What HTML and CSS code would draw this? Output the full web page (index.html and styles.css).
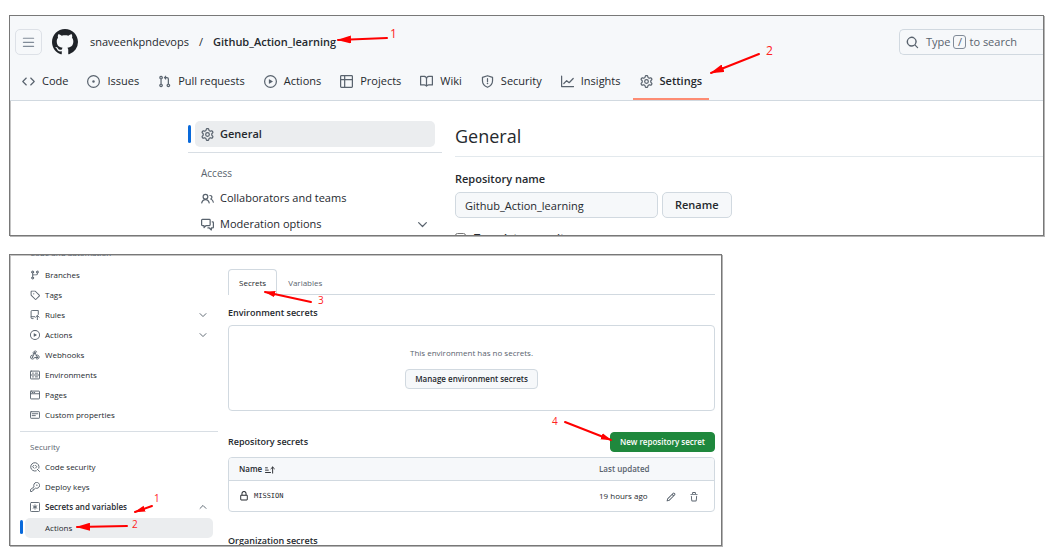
FILE: index.html
```html
<!DOCTYPE html>
<html lang="en">
<head>
<meta charset="utf-8">
<title>Github_Action_learning settings</title>
<link rel="stylesheet" href="styles.css">
</head>
<body>
<svg class="sprite" aria-hidden="true">
  <defs>
    <symbol id="bars" viewBox="0 0 16 16"><path d="M1 2.75A.75.75 0 0 1 1.75 2h12.5a.75.75 0 0 1 0 1.500H1.750A.75.75 0 0 1 1 2.750Zm0 5A.75.75 0 0 1 1.750 7h12.500a.75.75 0 0 1 0 1.500H1.750A.75.75 0 0 1 1 7.750ZM1.750 12h12.500a.75.75 0 0 1 0 1.500H1.750a.75.75 0 0 1 0-1.500Z"/></symbol>
    <symbol id="mark" viewBox="0 0 16 16"><path d="M8 0C3.58 0 0 3.58 0 8c0 3.54 2.29 6.53 5.47 7.59.4.07.55-.17.55-.38 0-.19-.01-.82-.01-1.49-2.01.37-2.53-.49-2.69-.94-.09-.23-.48-.94-.82-1.13-.28-.15-.68-.52-.01-.53.63-.01 1.08.58 1.23.82.72 1.21 1.87.87 2.33.66.07-.52.28-.87.51-1.07-1.78-.2-3.64-.89-3.64-3.95 0-.87.31-1.59.82-2.15-.08-.2-.36-1.02.08-2.12 0 0 .67-.21 2.2.82.64-.18 1.32-.27 2-.27.68 0 1.36.09 2 .27 1.53-1.04 2.2-.82 2.2-.82.44 1.1.16 1.92.08 2.12.51.56.82 1.27.82 2.15 0 3.07-1.87 3.75-3.65 3.95.29.25.54.73.54 1.48 0 1.07-.01 1.93-.01 2.2 0 .21.15.46.55.38A8.013 8.013 0 0 0 16 8c0-4.42-3.58-8-8-8z"/></symbol>
    <symbol id="code" viewBox="0 0 16 16"><path d="m11.28 3.22 4.25 4.25a.75.75 0 0 1 0 1.06l-4.25 4.25a.749.749 0 0 1-1.275-.326.749.749 0 0 1 .215-.734L13.94 8l-3.72-3.72a.749.749 0 0 1 .326-1.275.749.749 0 0 1 .734.215Zm-6.56 0a.751.751 0 0 1 1.042.018.751.751 0 0 1 .018 1.042L2.06 8l3.720 3.720a.749.749 0 0 1-.326 1.275.749.749 0 0 1-.734-.215L.47 8.53a.75.75 0 0 1 0-1.06Z"/></symbol>
    <symbol id="issue" viewBox="0 0 16 16"><path d="M8 9.5a1.5 1.5 0 1 0 0-3 1.5 1.5 0 0 0 0 3Z"/><path d="M8 0a8 8 0 1 1 0 16A8 8 0 0 1 8 0ZM1.5 8a6.5 6.5 0 1 0 13 0 6.5 6.5 0 0 0-13 0Z"/></symbol>
    <symbol id="pull" viewBox="0 0 16 16"><path d="M1.5 3.25a2.25 2.25 0 1 1 3 2.122v5.256a2.251 2.251 0 1 1-1.5 0V5.372A2.25 2.25 0 0 1 1.5 3.25Zm5.677-.177L9.573.677A.25.25 0 0 1 10 .854V2.5h1A2.5 2.5 0 0 1 13.5 5v5.628a2.251 2.251 0 1 1-1.5 0V5a1 1 0 0 0-1-1h-1v1.646a.25.25 0 0 1-.427.177L7.177 3.427a.25.25 0 0 1 0-.354ZM3.75 2.5a.75.75 0 1 0 0 1.5.75.75 0 0 0 0-1.5Zm0 9.5a.75.75 0 1 0 0 1.5.75.75 0 0 0 0-1.5Zm8.25.75a.75.75 0 1 0 1.5 0 .75.75 0 0 0-1.5 0Z"/></symbol>
    <symbol id="play" viewBox="0 0 16 16"><path d="M8 0a8 8 0 1 1 0 16A8 8 0 0 1 8 0ZM1.5 8a6.5 6.5 0 1 0 13 0 6.5 6.5 0 0 0-13 0Zm4.879-2.773 4.264 2.559a.25.25 0 0 1 0 .428l-4.264 2.559A.25.25 0 0 1 6 10.559V5.442a.25.25 0 0 1 .379-.215Z"/></symbol>
    <symbol id="table" viewBox="0 0 16 16"><path d="M0 1.75C0 .784.784 0 1.75 0h12.5C15.216 0 16 .784 16 1.75v12.5A1.75 1.75 0 0 1 14.25 16H1.75A1.75 1.75 0 0 1 0 14.25ZM6.5 6.5v8h7.75a.25.25 0 0 0 .25-.25V6.5Zm8-1.5V1.75a.25.25 0 0 0-.25-.25H6.5V5Zm-13 1.5v7.75c0 .138.112.25.25.25H5v-8ZM5 5V1.5H1.75a.25.25 0 0 0-.25.25V5Z"/></symbol>
    <symbol id="book" viewBox="0 0 16 16"><path d="M0 1.75A.75.75 0 0 1 .75 1h4.253c1.227 0 2.317.59 3 1.501A3.743 3.743 0 0 1 11.006 1h4.245a.75.75 0 0 1 .75.75v10.5a.75.75 0 0 1-.75.75h-4.507a2.25 2.25 0 0 0-1.591.659l-.622.621a.75.75 0 0 1-1.06 0l-.622-.621A2.25 2.25 0 0 0 5.258 13H.75a.75.75 0 0 1-.75-.75Zm7.251 10.324.004-5.073-.002-2.253A2.25 2.25 0 0 0 5.003 2.5H1.5v9h3.757a3.75 3.75 0 0 1 1.994.574ZM8.755 4.75l-.004 7.322a3.752 3.752 0 0 1 1.992-.572H14.5v-9h-3.495a2.25 2.25 0 0 0-2.25 2.25Z"/></symbol>
    <symbol id="shield" viewBox="0 0 16 16"><path class="line" d="M8 .9 14.200 2.900V7c0 3.600-2.400 6.500-6.200 8.100C4.200 13.500 1.800 10.600 1.800 7V2.900ZM8 4.500v3.700"/><circle cx="8" cy="10.500" r="1"/></symbol>
    <symbol id="graph" viewBox="0 0 16 16"><path class="line" d="M.75 1.500V14.250H15.500M3.500 10.500 7 7l3 2.500L15 4.300"/></symbol>
    <symbol id="gear" viewBox="0 0 16 16"><path d="M8 0a8.2 8.2 0 0 1 .701.031C9.444.095 9.99.645 10.16 1.29l.288 1.107c.018.066.079.158.212.224.231.114.454.243.668.386.123.082.233.09.299.071l1.103-.303c.644-.176 1.392.021 1.82.63.27.385.506.792.704 1.218.315.675.111 1.422-.364 1.891l-.814.806c-.049.048-.098.147-.088.294.016.257.016.515 0 .772-.01.147.038.246.088.294l.814.806c.475.469.679 1.216.364 1.891a7.977 7.977 0 0 1-.704 1.217c-.428.61-1.176.807-1.82.63l-1.102-.302c-.067-.019-.177-.011-.3.071a5.909 5.909 0 0 1-.668.386c-.133.066-.194.158-.211.224l-.29 1.106c-.168.646-.715 1.196-1.458 1.26a8.006 8.006 0 0 1-1.402 0c-.743-.064-1.289-.614-1.458-1.26l-.289-1.106c-.018-.066-.079-.158-.212-.224a5.738 5.738 0 0 1-.668-.386c-.123-.082-.233-.09-.299-.071l-1.103.303c-.644.176-1.392-.021-1.82-.63a8.12 8.12 0 0 1-.704-1.218c-.315-.675-.111-1.422.363-1.891l.815-.806c.05-.048.098-.147.088-.294a6.214 6.214 0 0 1 0-.772c.01-.147-.038-.246-.088-.294l-.815-.806C.635 6.045.431 5.298.746 4.623a7.92 7.92 0 0 1 .704-1.217c.428-.61 1.176-.807 1.82-.63l1.102.302c.067.019.177.011.3-.071.214-.143.437-.272.668-.386.133-.066.194-.158.211-.224l.29-1.106C6.009.645 6.556.095 7.299.03 7.53.01 7.764 0 8 0Zm-.571 1.525c-.036.003-.108.036-.137.146l-.289 1.105c-.147.561-.549.967-.998 1.189-.173.086-.34.183-.5.29-.417.278-.97.423-1.529.27l-1.103-.303c-.109-.03-.175.016-.195.045-.22.312-.412.644-.573.99-.014.031-.021.11.059.19l.815.806c.411.406.562.957.53 1.456a4.709 4.709 0 0 0 0 .582c.032.499-.119 1.05-.53 1.456l-.815.806c-.081.08-.073.159-.059.19.162.346.353.677.573.989.02.03.085.076.195.046l1.102-.303c.56-.153 1.113-.008 1.53.27.161.107.328.204.501.29.447.222.85.629.997 1.189l.289 1.105c.029.109.101.143.137.146a6.6 6.6 0 0 0 1.142 0c.036-.003.108-.036.137-.146l.289-1.105c.147-.561.549-.967.998-1.189.173-.086.34-.183.5-.29.417-.278.97-.423 1.529-.27l1.103.303c.109.029.175-.016.195-.045.22-.313.411-.644.573-.99.014-.031.021-.11-.059-.19l-.815-.806c-.411-.406-.562-.957-.53-1.456a4.709 4.709 0 0 0 0-.582c-.032-.499.119-1.05.53-1.456l.815-.806c.081-.08.073-.159.059-.19a6.464 6.464 0 0 0-.573-.989c-.02-.03-.085-.076-.195-.046l-1.102.303c-.56.153-1.113.008-1.53-.27a4.44 4.44 0 0 0-.501-.29c-.447-.222-.85-.629-.997-1.189l-.289-1.105c-.029-.11-.101-.143-.137-.146a6.6 6.6 0 0 0-1.142 0ZM11 8a3 3 0 1 1-6 0 3 3 0 0 1 6 0ZM9.5 8a1.5 1.5 0 1 0-3.001.001A1.5 1.5 0 0 0 9.5 8Z"/></symbol>
    <symbol id="search" viewBox="0 0 16 16"><path d="M10.680 11.740a6 6 0 0 1-7.922-8.982 6 6 0 0 1 8.982 7.922l3.040 3.040a.749.749 0 0 1-.326 1.275.749.749 0 0 1-.734-.215ZM11.500 7a4.499 4.499 0 1 0-8.997 0A4.499 4.499 0 0 0 11.500 7Z"/></symbol>
    <symbol id="people" viewBox="0 0 16 16"><path class="line" d="M.9 13.500c.5-2.500 2.300-4.200 4.600-4.200s4.100 1.700 4.600 4.200M11 4.300c1.500 0 2.400 1 2.400 2.200 0 1-.6 1.700-1.400 2.100 1.700.6 2.900 2 3.200 4"/><circle class="line" cx="5.500" cy="5.750" r="2.900"/></symbol>
    <symbol id="discussion" viewBox="0 0 16 16"><path class="line" d="M1.750 1.750h8.500a1 1 0 0 1 1 1v5.500a1 1 0 0 1-1 1H6.300L3.750 11.800V9.250h-2a1 1 0 0 1-1-1v-5.500a1 1 0 0 1 1-1ZM13.800 4.750h.45a1 1 0 0 1 1 1v5.500a1 1 0 0 1-1 1h-1.500v2.500l-2.500-2.500H8.500"/></symbol>
    <symbol id="down" viewBox="0 0 16 16"><path class="line" d="m3.250 5.750 4.750 4.750 4.750-4.750"/></symbol>
    <symbol id="up" viewBox="0 0 16 16"><path class="line" d="m3.250 10.250 4.750-4.750 4.750 4.750"/></symbol>
    <symbol id="branch" viewBox="0 0 16 16"><path d="M9.5 3.25a2.25 2.25 0 1 1 3 2.122V6A2.5 2.5 0 0 1 10 8.5H6a1 1 0 0 0-1 1v1.128a2.251 2.251 0 1 1-1.5 0V5.372a2.25 2.25 0 1 1 1.5 0v1.836A2.493 2.493 0 0 1 6 7h4a1 1 0 0 0 1-1v-.628A2.25 2.25 0 0 1 9.5 3.25Zm-6 0a.75.75 0 1 0 1.5 0 .75.75 0 0 0-1.5 0Zm8.25-.75a.75.75 0 1 0 0 1.5.75.75 0 0 0 0-1.5ZM4.250 12a.75.75 0 1 0 0 1.500.75.75 0 0 0 0-1.500Z"/></symbol>
    <symbol id="tag" viewBox="0 0 16 16"><path d="M1 7.775V2.75C1 1.784 1.784 1 2.750 1h5.025c.464 0 .910.184 1.238.513l6.250 6.250a1.750 1.750 0 0 1 0 2.474l-5.026 5.026a1.750 1.750 0 0 1-2.474 0l-6.250-6.250A1.752 1.752 0 0 1 1 7.775Zm1.500 0c0 .066.026.130.073.177l6.250 6.250a.25.25 0 0 0 .354 0l5.025-5.025a.25.25 0 0 0 0-.354l-6.250-6.250a.25.25 0 0 0-.177-.073H2.750a.25.25 0 0 0-.25.25ZM6 5a1 1 0 1 1 0 2 1 1 0 0 1 0-2Z"/></symbol>
    <symbol id="push" viewBox="0 0 16 16"><path class="line" d="M13.250 7V.75H3.500A1.750 1.750 0 0 0 1.750 2.500v9.750a1.500 1.500 0 0 0 1.500 1.500H5M2 10.750h5.500M11.750 15.500V9M9 11.500 11.750 8.750l2.750 2.750"/></symbol>
    <symbol id="webhook" viewBox="0 0 16 16"><path class="line" d="M5.500 6.500A3.200 3.200 0 1 1 11 3.200M3.900 8.100a3.200 3.200 0 1 0 3.200 3.900h5M9.700 8.600a3.200 3.200 0 1 1 .3 5.500M8 4.300l3.600 7.200M7.700 4.500 4.200 11"/><circle cx="8" cy="4.300" r="1.200"/><circle cx="4" cy="11.700" r="1.200"/><circle cx="12" cy="11.700" r="1.200"/></symbol>
    <symbol id="server" viewBox="0 0 16 16"><rect class="line" x=".75" y="1.750" width="14.500" height="12.500" rx="1"/><path class="line" d="M1 8h14M4 5h1.500M8.500 5h3.500M4 11h1.500M8.500 11h3.500"/></symbol>
    <symbol id="browser" viewBox="0 0 16 16"><rect class="line" x=".75" y="1.750" width="14.500" height="12.500" rx="1"/><path class="line" d="M1 6h14M3.500 4h1M6.500 4h1"/></symbol>
    <symbol id="note" viewBox="0 0 16 16"><rect class="line" x=".75" y="2.750" width="14.500" height="10.500" rx="1"/><path class="line" d="M3.500 6h9M3.500 9h5"/></symbol>
    <symbol id="codescan" viewBox="0 0 16 16"><path class="line" d="M14.200 10A6.700 6.700 0 1 0 10 14.200M11.500 11.500l3.700 3.700M6.200 5.300 4.200 7.500l2 2.200M8.800 5.300l2 2.200-2 2.200"/></symbol>
    <symbol id="key" viewBox="0 0 16 16"><path class="line" d="M6.200 7.200a4.750 4.750 0 1 1 2.600 2.600L7.500 11H6v1.500H4.500V14l-1.200 1.200H.75v-2.500Z"/><circle cx="11" cy="5" r="1.100"/></symbol>
    <symbol id="asterisk" viewBox="0 0 16 16"><rect class="line" x=".75" y=".75" width="14.500" height="14.500" rx="1.500"/><path class="line" d="M8 4.500v7M5 6.250l6 3.500M11 6.250l-6 3.500"/></symbol>
    <symbol id="sort" viewBox="0 0 16 16"><path class="line" d="M.8 4.500h3M.8 8.200h4.500M.8 12h8M12.200 13V3.500M9.500 6l2.700-2.700L15 6"/></symbol>
    <symbol id="lock" viewBox="0 0 16 16"><path d="M4 4a4 4 0 0 1 8 0v2h.250c.966 0 1.750.784 1.750 1.750v5.500A1.750 1.750 0 0 1 12.250 15h-8.500A1.750 1.750 0 0 1 2 13.250v-5.500C2 6.784 2.784 6 3.750 6H4Zm8.250 3.500h-8.500a.25.25 0 0 0-.25.25v5.500c0 .138.112.25.25.25h8.500a.25.25 0 0 0 .25-.25v-5.500a.25.25 0 0 0-.25-.25ZM10.500 6V4a2.500 2.500 0 1 0-5 0v2Z"/></symbol>
    <symbol id="pencil" viewBox="0 0 16 16"><path d="M11.013 1.427a1.75 1.75 0 0 1 2.474 0l1.086 1.086a1.75 1.75 0 0 1 0 2.474l-8.610 8.610c-.210.210-.470.364-.756.445l-3.251.930a.75.75 0 0 1-.927-.928l.929-3.250c.081-.286.235-.547.445-.758Zm.176 4.823L9.750 4.810l-6.286 6.287a.253.253 0 0 0-.064.108l-.558 1.953 1.953-.558a.253.253 0 0 0 .108-.064Zm1.238-3.763a.25.25 0 0 0-.354 0L10.811 3.750l1.439 1.440 1.263-1.263a.25.25 0 0 0 0-.354Z"/></symbol>
    <symbol id="trash" viewBox="0 0 16 16"><path d="M11 1.750V3h2.250a.75.75 0 0 1 0 1.500H2.750a.75.75 0 0 1 0-1.500H5V1.750C5 .784 5.784 0 6.750 0h2.500C10.216 0 11 .784 11 1.750ZM4.496 6.675l.660 6.600a.25.25 0 0 0 .249.225h5.190a.25.25 0 0 0 .249-.225l.660-6.600a.75.75 0 0 1 1.492.149l-.660 6.600A1.748 1.748 0 0 1 10.595 15h-5.190a1.750 1.750 0 0 1-1.741-1.575l-.660-6.600a.75.75 0 1 1 1.492-.150ZM6.500 1.750V3h3V1.750a.25.25 0 0 0-.25-.25h-2.500a.25.25 0 0 0-.25.25Z"/></symbol>
    <marker id="tip" viewBox="0 0 14 8" refX="13" refY="4" markerWidth="14" markerHeight="8" markerUnits="userSpaceOnUse" orient="auto"><path class="head" d="M0 0 14 4 0 8Z"/></marker>
    <marker id="tip-small" viewBox="0 0 14 8" refX="13" refY="4" markerWidth="11" markerHeight="7" markerUnits="userSpaceOnUse" orient="auto"><path class="head" d="M0 0 14 4 0 8Z"/></marker>
  </defs>
</svg>

<section class="panel overview">
  <header class="top">
    <div class="bar">
      <button class="menu" aria-label="Open menu"><svg class="icon"><use href="#bars"/></svg></button>
      <svg class="logo"><use href="#mark"/></svg>
      <nav class="crumbs"><a href="#owner">snaveenkpndevops</a><span>/</span><a class="strong" href="#repo">Github_Action_learning</a></nav>
      <button class="search"><svg class="icon"><use href="#search"/></svg><span>Type</span><kbd>/</kbd><span>to search</span></button>
    </div>
    <nav class="tabs">
      <a href="#code"><svg class="icon"><use href="#code"/></svg>Code</a>
      <a href="#issues"><svg class="icon"><use href="#issue"/></svg>Issues</a>
      <a href="#pulls"><svg class="icon"><use href="#pull"/></svg>Pull requests</a>
      <a href="#actions"><svg class="icon"><use href="#play"/></svg>Actions</a>
      <a href="#projects"><svg class="icon"><use href="#table"/></svg>Projects</a>
      <a href="#wiki"><svg class="icon"><use href="#book"/></svg>Wiki</a>
      <a href="#security"><svg class="icon"><use href="#shield"/></svg>Security</a>
      <a href="#insights"><svg class="icon"><use href="#graph"/></svg>Insights</a>
      <a class="current" href="#settings"><svg class="icon"><use href="#gear"/></svg>Settings</a>
    </nav>
  </header>
  <div class="general">
    <nav class="side">
      <a class="selected" href="#general"><svg class="icon"><use href="#gear"/></svg>General</a>
      <hr>
      <h3>Access</h3>
      <a href="#teams"><svg class="icon"><use href="#people"/></svg>Collaborators and teams</a>
      <a href="#moderation"><svg class="icon"><use href="#discussion"/></svg>Moderation options<svg class="icon chevron"><use href="#down"/></svg></a>
    </nav>
    <main class="form">
      <h1>General</h1>
      <label class="name" for="repo-name">Repository name</label>
      <div class="rename"><input id="repo-name" type="text" value="Github_Action_learning"><button>Rename</button></div>
      <div class="template"><input id="template" type="checkbox"><label for="template">Template repository</label></div>
    </main>
  </div>
  <svg class="notes">
    <path d="M377 22 328 24" marker-end="url(#tip)"/><text x="380" y="22">1</text>
    <path d="M749 38 701 57" marker-end="url(#tip)"/><text x="756" y="39">2</text>
  </svg>
</section>

<section class="panel secrets">
  <nav class="side">
    <div class="cut"><h3>Code and automation</h3></div>
    <a href="#branches"><svg class="icon"><use href="#branch"/></svg>Branches</a>
    <a href="#tags"><svg class="icon"><use href="#tag"/></svg>Tags</a>
    <a href="#rules"><svg class="icon"><use href="#push"/></svg>Rules<svg class="icon chevron"><use href="#down"/></svg></a>
    <a href="#repo-actions"><svg class="icon"><use href="#play"/></svg>Actions<svg class="icon chevron"><use href="#down"/></svg></a>
    <a href="#webhooks"><svg class="icon"><use href="#webhook"/></svg>Webhooks</a>
    <a href="#environments"><svg class="icon"><use href="#server"/></svg>Environments</a>
    <a href="#pages"><svg class="icon"><use href="#browser"/></svg>Pages</a>
    <a href="#properties"><svg class="icon"><use href="#note"/></svg>Custom properties</a>
    <hr>
    <h3>Security</h3>
    <a href="#code-security"><svg class="icon"><use href="#codescan"/></svg>Code security</a>
    <a href="#deploy-keys"><svg class="icon"><use href="#key"/></svg>Deploy keys</a>
    <a class="strong" href="#secrets"><svg class="icon"><use href="#asterisk"/></svg>Secrets and variables<svg class="icon chevron"><use href="#up"/></svg></a>
    <a class="selected nested" href="#secret-actions">Actions</a>
  </nav>
  <main class="content">
    <nav class="subtabs"><a class="current" href="#secrets-tab">Secrets</a><a href="#variables-tab">Variables</a></nav>
    <h2>Environment secrets</h2>
    <div class="empty"><p>This environment has no secrets.</p><button>Manage environment secrets</button></div>
    <div class="heading"><h2>Repository secrets</h2><button class="primary">New repository secret</button></div>
    <div class="frame">
      <table>
        <thead><tr><th class="first">Name <svg class="icon"><use href="#sort"/></svg></th><th class="date">Last updated</th><th class="tools"></th></tr></thead>
        <tbody><tr>
          <td class="first"><svg class="icon"><use href="#lock"/></svg><code>MISSION</code></td>
          <td class="date">19 hours ago</td>
          <td class="tools"><button aria-label="Edit"><svg class="icon"><use href="#pencil"/></svg></button><button aria-label="Delete"><svg class="icon"><use href="#trash"/></svg></button></td>
        </tr></tbody>
      </table>
    </div>
    <div class="cut-end"><h2>Organization secrets</h2></div>
  </main>
  <svg class="notes small">
    <path d="M142 251 125 257" marker-end="url(#tip-small)"/><text x="144" y="247">1</text>
    <path d="M117 271 67 272" marker-end="url(#tip)"/><text x="122" y="273">2</text>
    <path d="M301 47 255 37" marker-end="url(#tip-small)"/><text x="308" y="49">3</text>
    <path d="M555 167 601 185" marker-end="url(#tip-small)"/><text x="542" y="170">4</text>
  </svg>
</section>
</body>
</html>
```
FILE: styles.css
```css
* { box-sizing: border-box; }
body {
  margin: 0;
  padding: 15px 4px 5px 9px;
  background: #fff;
  color: #25292e;
  font: 11px/16px "Open Sans", "Noto Sans", sans-serif;
}
a { color: inherit; text-decoration: none; }
h1, h2, h3, p { margin: 0; }
button, input { font: inherit; color: inherit; }
button { cursor: pointer; }
hr { border: 0; border-top: 1px solid #d8dee4; }
.sprite { position: absolute; width: 0; height: 0; }
.icon { width: 13px; height: 13px; flex: none; fill: currentColor; color: #59636e; }
.line { fill: none; stroke: currentColor; stroke-width: 1.5; stroke-linecap: round; stroke-linejoin: round; }
.strong { font-weight: 600; }
.panel {
  position: relative;
  border: 1px solid #787878;
  box-shadow: 1px 1px 0 #b4b4b4, inset 1px 1px 0 #c4c4c4;
}
.notes { position: absolute; inset: 0; width: 100%; height: 100%; pointer-events: none; }
.notes path { stroke: #f00; stroke-width: 2; stroke-linecap: round; }
.notes text { fill: #f22; font-size: 12px; }
.notes.small text { font-size: 10px; }
.head { fill: #f00; }

.overview { margin-bottom: 18px; }
.top { background: #f6f8fa; border-bottom: 1px solid #d1d9e0; padding: 13px 0 0 5px; }
.bar { display: flex; align-items: center; }
.menu { display: grid; place-items: center; width: 27px; height: 26px; padding: 0; border: 1px solid #dde1e7; border-radius: 5px; background: transparent; }
.menu .icon { color: #818b98; }
.logo { width: 26px; height: 26px; margin-left: 10px; fill: #1f2328; }
.crumbs { display: flex; gap: 10px; margin-left: 12px; flex: 1; }
.search {
  display: flex; align-items: center; gap: 3px;
  width: 144px; height: 26px; padding: 0 6px;
  border: 1px solid #d1d9e0; border-right: 0; border-radius: 5px 0 0 5px;
  background: transparent; color: #59636e;
}
.search .icon { margin-right: 4px; }
.search kbd { font: inherit; width: 13px; line-height: 12px; text-align: center; border: 1px solid #818b98; border-radius: 3px; }
.tabs { display: flex; gap: 5px; margin-top: 9px; }
.tabs a { display: flex; align-items: center; gap: 7px; padding: 0 7px; height: 36px; border-bottom: 2px solid transparent; }
.tabs .current { font-weight: 600; border-color: #fd8c73; }
.general { display: flex; padding-left: 178px; }
.side a { display: flex; align-items: center; }
.side h3 { font-weight: 600; color: #59636e; }
.side .chevron { margin-left: auto; }
.side .selected { position: relative; background: #ebedef; border-radius: 5px; }
.selected::before { content: ""; position: absolute; left: -7px; top: 4px; bottom: 4px; width: 3px; border-radius: 2px; background: #0969da; }
.general .side { width: 254px; padding-top: 20px; margin-bottom: -3px; }
.general .side a { height: 26px; gap: 6px; margin: 0 7px; padding: 0 6px; }
.general .selected { font-weight: 600; }
.general hr { margin: 5px 0 12px; }
.general .side h3 { font-size: 10px; font-weight: 400; padding-left: 13px; margin-bottom: 4px; }
.form { flex: 1; margin-left: 13px; padding-top: 20px; }
.form h1 { font-size: 18px; line-height: 30px; font-weight: 400; padding-bottom: 5px; border-bottom: 1px solid #e3e9ed; }
.name { display: block; font-weight: 600; margin: 14px 0 5px; }
.rename { display: flex; gap: 4px; }
.rename input { width: 203px; height: 26px; padding: 0 9px; border: 1px solid #d1d9e0; border-radius: 5px; background: #f6f8fa; }
.rename button { height: 26px; padding: 0 12px; border: 1px solid #d1d9e0; border-radius: 5px; background: #f6f8fa; font-weight: 600; }
.template { display: flex; gap: 8px; height: 2px; margin-top: 15px; overflow: hidden; }
.template input { margin: 0; width: 11px; height: 11px; }
.template label { font-weight: 600; line-height: 10px; }

.secrets { display: flex; max-width: 713px; font-size: 8px; line-height: 12px; }
.secrets .icon { width: 10px; height: 10px; }
.secrets .side { width: 198px; margin-left: 10px; }
.secrets .side a { height: 20px; gap: 5px; margin: 0 5px; padding: 0 5px; }
.secrets .side h3 { font-size: 8px; font-weight: 400; padding-left: 10px; }
.cut { display: flex; align-items: flex-end; height: 4px; margin-bottom: 6px; overflow: hidden; }
.secrets hr { margin: 6px 0 9px; }
.secrets .side h3 + a { margin-top: 4px; }
.secrets .side .nested { margin-top: 1px; padding-left: 20px; }
.secrets .nested::before { left: -5px; top: 2px; }
.content { flex: 1; min-width: 0; margin: 0 6px 0 10px; }
.content h2 { font-size: 9px; line-height: 14px; font-weight: 600; }
.subtabs { display: flex; height: 26px; margin: 14px 0 11px; border-bottom: 1px solid #d1d9e0; color: #59636e; }
.subtabs a { height: 26px; padding: 0 10px; line-height: 26px; border: 1px solid transparent; border-bottom: 0; }
.subtabs .current { color: #25292e; background: #fff; border-color: #d1d9e0; border-radius: 4px 4px 0 0; }
.empty { display: flex; flex-direction: column; align-items: center; gap: 10px; margin-top: 5px; padding: 21px 0; border: 1px solid #d1d9e0; border-radius: 4px; color: #59636e; }
.content .empty button, .primary { height: 20px; padding: 0 9px; border: 1px solid #d1d9e0; border-radius: 4px; background: #f6f8fa; color: #25292e; font-weight: 600; }
.heading { display: flex; justify-content: space-between; align-items: center; margin: 21px 0 5px; }
.content .primary { padding: 0 9px; background: #1f883d; border-color: #1f883d; color: #fff; }
.frame { border: 1px solid #d1d9e0; border-radius: 4px; overflow: hidden; }
table { width: 100%; border-collapse: collapse; }
th, td { padding: 0; text-align: left; vertical-align: middle; font-weight: 400; }
th { height: 22px; background: #f6f8fa; border-bottom: 1px solid #d1d9e0; font-weight: 600; }
td { height: 31px; }
.first { padding-left: 10px; }
.first .icon { color: #25292e; vertical-align: middle; }
th .icon { margin-left: 1px; }
code { font: 7px/12px "DejaVu Sans Mono", "Liberation Mono", monospace; margin-left: 5px; vertical-align: middle; }
th.date { color: #59636e; }
.date { width: 67px; }
.tools { width: 48px; }
.tools button { display: inline-grid; padding: 0; margin-right: 13px; border: 0; background: none; vertical-align: middle; }
.tools button + button { margin-right: 0; }
.cut-end { height: 11px; margin-top: 22px; overflow: hidden; }
```
